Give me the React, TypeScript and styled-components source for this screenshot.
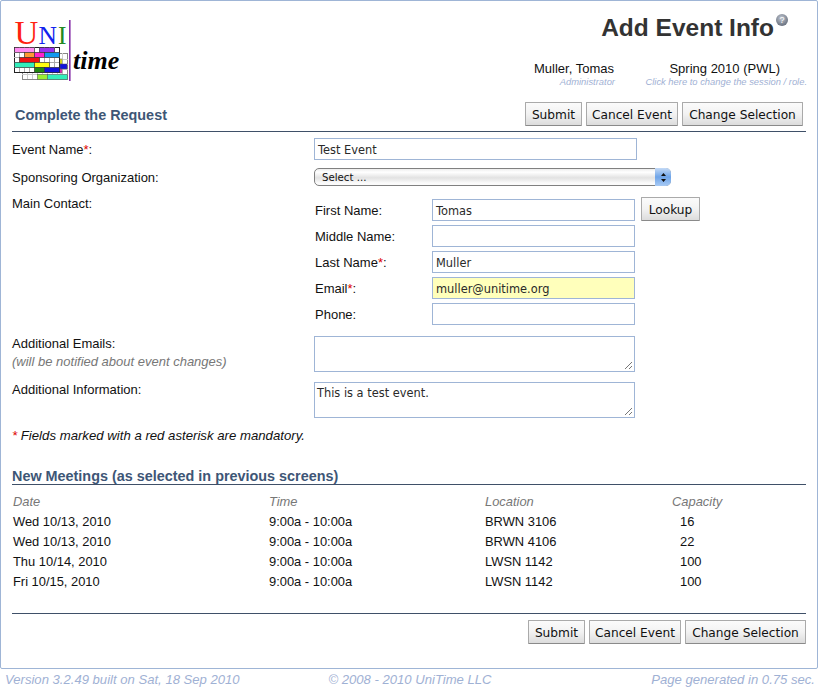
import React from "react";
import styled, { createGlobalStyle } from "styled-components";

const GlobalStyle = createGlobalStyle`
  html, body {
    margin: 0;
    padding: 0;
    background: #fff;
    font-family: "Liberation Sans", Arial, sans-serif;
    font-size: 13px;
    color: #111;
  }
`;

const Page = styled.div`
  width: 818px;
  height: 690px;
  overflow: hidden;
`;

const Frame = styled.div`
  box-sizing: border-box;
  width: 818px;
  height: 669px;
  border: 1px solid #9fb5d6;
  border-radius: 2px;
  padding: 0 11px;
`;

const Header = styled.header`
  display: flex;
  justify-content: space-between;
  height: 99px;
`;

const LogoBox = styled.div`
  padding-top: 9px;
`;

const HeaderRight = styled.div`
  display: flex;
  flex-direction: column;
  align-items: flex-end;
`;

const Title = styled.h1`
  margin: 13px 32px 0 0;
  font-size: 24.5px;
  line-height: 28px;
  font-weight: bold;
  color: #333;
  position: relative;
`;

const Help = styled.span`
  position: absolute;
  right: -14px;
  top: 0;
  width: 12px;
  height: 12px;
  border-radius: 50%;
  background: radial-gradient(circle at 45% 35%, #c2c8d2, #69717f 75%);
  color: #fff;
  font-size: 9px;
  line-height: 12px;
  text-align: center;
  font-weight: normal;
`;

const Session = styled.div`
  display: flex;
  margin: 19px -1px 0 0;
`;

const SessionCell = styled.div<{ $w: number; $mr: number }>`
  width: ${(p) => p.$w}px;
  margin-right: ${(p) => p.$mr}px;
  text-align: right;
`;

const SessionMain = styled.div<{ $pr: number }>`
  font-size: 13px;
  line-height: 15px;
  color: #111;
  white-space: nowrap;
  padding-right: ${(p) => p.$pr}px;
`;

const SessionHint = styled.div`
  font-size: 9.4px;
  line-height: 11px;
  font-style: italic;
  color: #9fb1d4;
  white-space: nowrap;
`;

const SectionBar = styled.div`
  display: flex;
  justify-content: space-between;
  align-items: flex-end;
  border-bottom: 1px solid #3f5068;
  height: 32px;
  padding-bottom: 5px;
  box-sizing: border-box;
`;

const SectionTitle = styled.div`
  font-size: 14.4px;
  font-weight: bold;
  color: #3e5676;
  padding: 0 0 2px 3px;
  line-height: 17px;
`;

const Buttons = styled.div<{ $inset?: number }>`
  display: flex;
  gap: 4px;
  margin-right: ${(p) => p.$inset ?? 0}px;
`;

const Button = styled.button<{ $w: number }>`
  box-sizing: border-box;
  width: ${(p) => p.$w}px;
  height: 24px;
  padding: 1px 0 0;
  border: 1px solid #aaa;
  border-bottom-color: #8a8a8a;
  border-radius: 1px;
  background: linear-gradient(#fbfbfb, #f2f2f2 50%, #dcdcdc);
  font-family: "DejaVu Sans", Verdana, sans-serif;
  font-size: 12.2px;
  white-space: nowrap;
  color: #111;
`;

const Form = styled.div`
  display: grid;
  grid-template-columns: 302px 1fr;
  padding-top: 6px;
`;

const Label = styled.div<{ $mt: number; $h: number; $lh?: number }>`
  margin-top: ${(p) => p.$mt}px;
  height: ${(p) => p.$h}px;
  font-size: 13px;
  line-height: ${(p) => p.$lh ?? 15}px;
  color: #111;
`;

const Value = styled.div<{ $mt: number; $h: number }>`
  margin-top: ${(p) => p.$mt}px;
  height: ${(p) => p.$h}px;
  display: flex;
`;

const Star = styled.span`
  color: #d00;
`;

const Muted = styled.div`
  color: #777;
  font-style: italic;
`;

const Input = styled.div<{ $w: number; $bg?: string }>`
  box-sizing: border-box;
  width: ${(p) => p.$w}px;
  height: 22px;
  border: 1px solid #9fb5d6;
  background: ${(p) => p.$bg ?? "#fff"};
  padding: 1px 3px 0;
  font-family: "DejaVu Sans", Verdana, sans-serif;
  font-size: 11.4px;
  line-height: 20px;
  color: #2a2a2a;
`;

const TextArea = styled.div`
  box-sizing: border-box;
  position: relative;
  width: 321px;
  height: 36px;
  border: 1px solid #9fb5d6;
  padding: 4px 2px;
  font-family: "DejaVu Sans", Verdana, sans-serif;
  font-size: 11.4px;
  line-height: 13px;
  color: #2a2a2a;
`;

const Grip = styled.svg`
  position: absolute;
  right: 1px;
  bottom: 1px;
`;

const SelectBox = styled.div`
  box-sizing: border-box;
  position: relative;
  width: 357px;
  height: 18px;
  margin-top: 1px;
  border: 1px solid #808080;
  border-radius: 5px;
  background: linear-gradient(#ededed, #fff 20%, #e2e2e2 55%, #fbfbfb 88%);
  padding: 1px 0 0 7px;
  font-family: "DejaVu Sans", Verdana, sans-serif;
  font-size: 10.2px;
  line-height: 16px;
  color: #111;
`;

const SelectArrow = styled.div`
  position: absolute;
  right: -1px;
  top: -1px;
  width: 16px;
  height: 18px;
  border-radius: 0 5px 5px 0;
  background: linear-gradient(#c4daf6, #6ea4e8 50%, #a8caf4);
  display: flex;
  align-items: center;
  justify-content: center;
`;

const Contact = styled.div`
  display: grid;
  grid-template-columns: 118px 203px auto;
  grid-auto-rows: 26px;
`;

const ContactLabel = styled.div`
  font-size: 13px;
  line-height: 24px;
  padding-left: 1px;
  color: #111;
`;

const ContactValue = styled.div`
  display: flex;
  grid-column: 2 / 4;
  gap: 6px;
  align-items: flex-start;
`;

const LookupButton = styled(Button)`
  margin-top: -2px;
`;

const Note = styled.div`
  margin-top: 10px;
  font-size: 13.2px;
  line-height: 15px;
  font-style: italic;
  color: #111;
`;

const Meetings = styled.div`
  margin-top: 26px;
`;

const MeetingsTitle = styled.div`
  border-bottom: 1px solid #3f5068;
  font-size: 14.4px;
  font-weight: bold;
  color: #3e5676;
  line-height: 15px;
`;

const MeetingGrid = styled.div`
  display: grid;
  grid-template-columns: 256px 216px 187px 1fr;
  grid-auto-rows: 20px;
  padding: 7px 0 0 1px;
  font-size: 12.9px;
  line-height: 20px;
`;

const MeetingHead = styled.div`
  color: #777;
  font-style: italic;
`;

const MeetingCell = styled.div<{ $pl?: number }>`
  color: #111;
  padding-left: ${(p) => p.$pl ?? 0}px;
`;

const FootBar = styled.div`
  margin-top: 21px;
  border-top: 1px solid #3f5068;
  padding-top: 6px;
  display: flex;
  justify-content: flex-end;
`;

const PageFooter = styled.footer`
  display: grid;
  grid-template-columns: 1fr 1fr 1fr;
  padding: 2px 3px 0 5px;
  font-size: 13.1px;
  line-height: 17px;
  font-style: italic;
  color: #9fb1d4;
`;

const FootCell = styled.div<{ $align: string }>`
  text-align: ${(p) => p.$align};
  white-space: nowrap;
`;

const palette = {
  pink: "#ff8cf0",
  purple: "#9933ee",
  orange: "#ff9933",
  magenta: "#ff22cc",
  blue: "#1199ee",
  red: "#ee1111",
  teal: "#33eebb",
  yellow: "#ffff11",
  green: "#228811",
  navy: "#1111dd",
  lime: "#99ee33",
};

const blocks: [number, number, number, number, string][] = [
  [14.5, 47.5, 20, 5, palette.pink],
  [39.5, 47.5, 15, 5, palette.purple],
  [24.5, 52.5, 10, 5, palette.orange],
  [34.5, 52.5, 10, 5, palette.magenta],
  [44.5, 52.5, 15, 5, palette.blue],
  [19.5, 57.5, 20, 5, palette.red],
  [14.5, 62.5, 20, 5, palette.teal],
  [34.5, 62.5, 15, 5, palette.yellow],
  [34.5, 67.5, 10, 5, palette.green],
  [44.5, 67.5, 15, 5, palette.navy],
];

const backBlocks: [number, number, number, number, string][] = [
  [60, 59, 2, 5, palette.yellow],
  [60, 64, 7, 5, palette.navy],
  [60, 69, 2, 4, palette.magenta],
  [37.5, 74.5, 10, 5, palette.lime],
  [47.5, 74.5, 20, 5, palette.teal],
];

const range = (from: number, to: number, step: number) => {
  const out: number[] = [];
  for (let v = from; v <= to; v += step) out.push(v);
  return out;
};

const Logo = () => (
  <svg width="112" height="74" viewBox="12 10 112 74" style={{ display: "block" }}>
    <rect x="22.5" y="53.5" width="45" height="26" fill="#fff" stroke="#888" strokeWidth="1" />
    {range(27.5, 62.5, 5).map((x) => (
      <line key={x} x1={x} y1="53" x2={x} y2="79" stroke="#ccc" strokeWidth="1" />
    ))}
    {range(59.5, 74.5, 5).map((y) => (
      <line key={y} x1="22" y1={y} x2="68" y2={y} stroke="#ccc" strokeWidth="1" />
    ))}
    {backBlocks.map(([x, y, w, h, c], i) => (
      <rect key={i} x={x} y={y} width={w} height={h} fill={c} stroke="#555" strokeWidth="0.5" />
    ))}
    <rect x="14.5" y="47.5" width="45" height="25" fill="#fff" stroke="#222" strokeWidth="1" />
    {range(19.5, 54.5, 5).map((x) => (
      <line key={x} x1={x} y1="47" x2={x} y2="72" stroke="#aaa" strokeWidth="1" />
    ))}
    {range(52.5, 67.5, 5).map((y) => (
      <line key={y} x1="14" y1={y} x2="59" y2={y} stroke="#aaa" strokeWidth="1" />
    ))}
    {blocks.map(([x, y, w, h, c], i) => (
      <rect key={i} x={x} y={y} width={w} height={h} fill={c} stroke="#333" strokeWidth="0.6" />
    ))}
    <text x="14.5" y="44" fontFamily="Liberation Serif" fontSize="33" fill="#ff2211">U</text>
    <text x="38.5" y="44" fontFamily="Liberation Serif" fontSize="25.5" fill="#1122ee">N</text>
    <text x="58" y="44" fontFamily="Liberation Serif" fontSize="25.5" fill="#228822">I</text>
    <rect x="69" y="20" width="1.6" height="61" fill="#8833aa" />
    <text x="73" y="69" fontFamily="Liberation Serif" fontSize="26" fontStyle="italic" fontWeight="bold" fill="#000">time</text>
  </svg>
);

const ActionButtons = ({ inset }: { inset?: number }) => (
  <Buttons $inset={inset}>
    <Button $w={57}>Submit</Button>
    <Button $w={92}>Cancel Event</Button>
    <Button $w={121}>Change Selection</Button>
  </Buttons>
);

const ResizeGrip = () => (
  <Grip width="9" height="9" viewBox="0 0 9 9">
    <path d="M1 8 L8 1 M5 8 L8 5" stroke="#777" strokeWidth="1" fill="none" />
  </Grip>
);

const meetings = [
  ["Wed 10/13, 2010", "9:00a - 10:00a", "BRWN 3106", "16"],
  ["Wed 10/13, 2010", "9:00a - 10:00a", "BRWN 4106", "22"],
  ["Thu 10/14, 2010", "9:00a - 10:00a", "LWSN 1142", "100"],
  ["Fri 10/15, 2010", "9:00a - 10:00a", "LWSN 1142", "100"],
];

export default function App() {
  return (
    <Page>
      <GlobalStyle />
      <Frame>
        <Header>
          <LogoBox>
            <Logo />
          </LogoBox>
          <HeaderRight>
            <Title>
              Add Event Info
              <Help>?</Help>
            </Title>
            <Session>
              <SessionCell $w={90} $mr={22}>
                <SessionMain $pr={1}>Muller, Tomas</SessionMain>
                <SessionHint>Administrator</SessionHint>
              </SessionCell>
              <SessionCell $w={170} $mr={0}>
                <SessionMain $pr={27}>Spring 2010 (PWL)</SessionMain>
                <SessionHint>Click here to change the session / role.</SessionHint>
              </SessionCell>
            </Session>
          </HeaderRight>
        </Header>
        <SectionBar>
          <SectionTitle>Complete the Request</SectionTitle>
          <ActionButtons inset={3} />
        </SectionBar>
        <Form>
          <Label $mt={4} $h={25}>
            Event Name<Star>*</Star>:
          </Label>
          <Value $mt={0} $h={29}>
            <Input $w={323}>Test Event</Input>
          </Value>
          <Label $mt={3} $h={23}>Sponsoring Organization:</Label>
          <Value $mt={0} $h={26}>
            <SelectBox>
              Select ...
              <SelectArrow>
                <svg width="7" height="11" viewBox="0 0 7 11">
                  <path d="M3.5 1 L6 4 H1 Z M3.5 10 L6 7 H1 Z" fill="#111" />
                </svg>
              </SelectArrow>
            </SelectBox>
          </Value>
          <Label $mt={3} $h={140}>Main Contact:</Label>
          <Value $mt={6} $h={137}>
            <Contact>
              <ContactLabel>First Name:</ContactLabel>
              <ContactValue>
                <Input $w={203}>Tomas</Input>
                <LookupButton $w={59}>Lookup</LookupButton>
              </ContactValue>
              <ContactLabel>Middle Name:</ContactLabel>
              <ContactValue>
                <Input $w={203} />
              </ContactValue>
              <ContactLabel>
                Last Name<Star>*</Star>:
              </ContactLabel>
              <ContactValue>
                <Input $w={203}>Muller</Input>
              </ContactValue>
              <ContactLabel>
                Email<Star>*</Star>:
              </ContactLabel>
              <ContactValue>
                <Input $w={203} $bg="#ffffbb">muller@unitime.org</Input>
              </ContactValue>
              <ContactLabel>Phone:</ContactLabel>
              <ContactValue>
                <Input $w={203} />
              </ContactValue>
            </Contact>
          </Value>
          <Label $mt={-1} $h={47} $lh={18}>
            Additional Emails:
            <Muted>(will be notified about event changes)</Muted>
          </Label>
          <Value $mt={0} $h={46}>
            <TextArea>
              <ResizeGrip />
            </TextArea>
          </Value>
          <Label $mt={0} $h={36}>Additional Information:</Label>
          <Value $mt={0} $h={36}>
            <TextArea>
              This is a test event.
              <ResizeGrip />
            </TextArea>
          </Value>
        </Form>
        <Note>
          <Star>*</Star> Fields marked with a red asterisk are mandatory.
        </Note>
        <Meetings>
          <MeetingsTitle>New Meetings (as selected in previous screens)</MeetingsTitle>
          <MeetingGrid>
            <MeetingHead>Date</MeetingHead>
            <MeetingHead>Time</MeetingHead>
            <MeetingHead>Location</MeetingHead>
            <MeetingHead>Capacity</MeetingHead>
            {meetings.map((m, i) => (
              <React.Fragment key={i}>
                <MeetingCell>{m[0]}</MeetingCell>
                <MeetingCell>{m[1]}</MeetingCell>
                <MeetingCell>{m[2]}</MeetingCell>
                <MeetingCell $pl={8}>{m[3]}</MeetingCell>
              </React.Fragment>
            ))}
          </MeetingGrid>
        </Meetings>
        <FootBar>
          <ActionButtons />
        </FootBar>
      </Frame>
      <PageFooter>
        <FootCell $align="left">Version 3.2.49 built on Sat, 18 Sep 2010</FootCell>
        <FootCell $align="center">© 2008 - 2010 UniTime LLC</FootCell>
        <FootCell $align="right">Page generated in 0.75 sec.</FootCell>
      </PageFooter>
    </Page>
  );
}
